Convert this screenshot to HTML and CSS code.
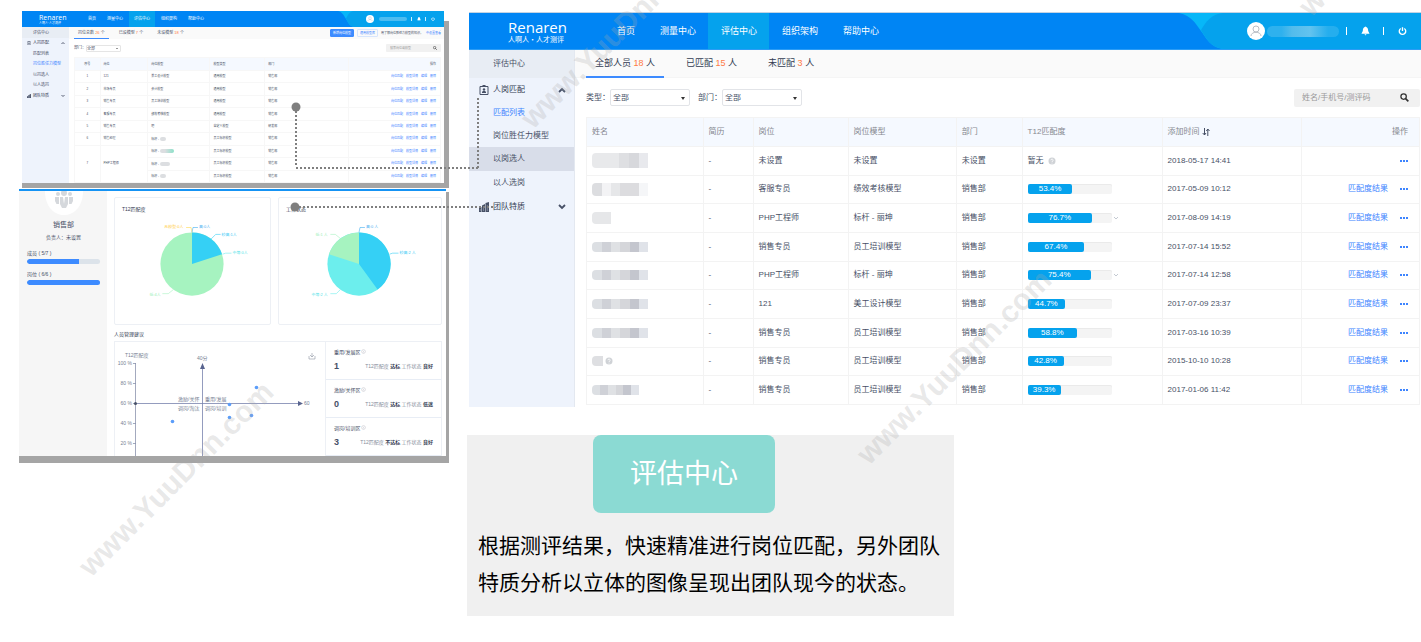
FILE: index.html
```html
<!DOCTYPE html>
<html lang="zh-CN">
<head>
<meta charset="utf-8">
<meta name="viewport" content="width=device-width, initial-scale=1">
<title>评估中心</title>
<link rel="stylesheet" href="styles.css">
</head>
<body>
<svg class="defs" width="0" height="0" aria-hidden="true">
  <symbol id="i-wave" viewBox="0 0 44 36" preserveAspectRatio="none"><path d="M0 0H44V36H0Z" fill="#07b7f8"/><path d="M0 0C13 3 16 10 22 18S31 34 44 36H0Z" fill="#0085f4"/><path d="M44 0C32 1 27 9 22 17C29 29 33 34 44 36Z" fill="#05a2ed"/></symbol>
  <symbol id="i-user" viewBox="0 0 18 18"><circle cx="9" cy="9" r="9" fill="#fff"/><circle cx="9" cy="7" r="3" fill="none" stroke="#b9bec6"/><path d="M4 14C4 9 14 9 14 14" fill="none" stroke="#b9bec6"/></symbol>
  <symbol id="i-bell" viewBox="0 0 10 10"><path d="M5 0C7 1 8 2 8 5L9.500 8H.5L2 5C2 2 3 1 5 0ZM3.800 8.500H6.200L5 10Z" fill="#fff"/></symbol>
  <symbol id="i-power" viewBox="0 0 10 10"><path d="M3 2.200A3.600 3.600 0 1 0 7 2.200M5 .8V5" fill="none" stroke="#fff" stroke-width="1.500"/></symbol>
  <symbol id="i-search" viewBox="0 0 10 10"><circle cx="4" cy="4" r="3" fill="none" stroke="#333" stroke-width="1.400"/><path d="M6.200 6.200L9.300 9.300" stroke="#333" stroke-width="1.800"/></symbol>
  <symbol id="i-badge" viewBox="0 0 10 10"><path d="M1 1.500H9V9.500H1Z" fill="none" stroke="#475066"/><path d="M3.500 0H6.500V2H3.500ZM3 8V7C3 5.500 7 5.500 7 7V8Z" fill="#475066"/><circle cx="5" cy="4.500" r="1.200" fill="#475066"/></symbol>
  <symbol id="i-bars" viewBox="0 0 10 10"><path d="M0 6L2.500 5V10H0ZM3 3.500L6 2V10H3ZM6.500 1L10 0V10H6.500Z" fill="#475066"/><path d="M1.300 7V9M4.500 5V9M8.300 3V9" stroke="#9aa3b5" stroke-width=".6"/></symbol>
  <symbol id="i-up" viewBox="0 0 8 6"><path d="M1 5L4 2L7 5" fill="none" stroke="#475066" stroke-width="1.800"/></symbol>
  <symbol id="i-down" viewBox="0 0 8 6"><path d="M1 1L4 4L7 1" fill="none" stroke="#475066" stroke-width="1.800"/></symbol>
  <symbol id="i-thin" viewBox="0 0 8 6"><path d="M2 2L4 4L6 2" fill="none" stroke="#b5bcc6" stroke-width=".8"/></symbol>
  <symbol id="i-help" viewBox="0 0 8 8"><circle cx="4" cy="4" r="3.500" fill="#cfd2d6"/><path d="M2.800 3.200C2.800 1.800 5.300 1.800 5.200 3.200C5.200 4 4 4 4 5M4 5.700V6.500" fill="none" stroke="#fff" stroke-width=".8"/></symbol>
  <symbol id="i-info" viewBox="0 0 8 8"><circle cx="4" cy="4" r="3" fill="none" stroke="#bcbfc6" stroke-width=".8"/><path d="M4 3V5.500" stroke="#bcbfc6" stroke-width=".8"/></symbol>
  <symbol id="i-sort" viewBox="0 0 8 8"><path d="M2.500 0V7M.7 5L2.500 7L4 5M5.800 8V1M4.300 3L5.800 1L7.500 3" fill="none" stroke="#475066"/></symbol>
</svg>

<main class="page">
  <div class="previews">
    <section class="mini" aria-label="岗位胜任力模型">
      <div class="mini-screen">
        <header class="mini-head">
          <a class="mini-logo" href="#"><b>Renaren</b><span>人啊人·人才测评</span></a>
          <nav class="mini-nav"><a href="#">首页</a><a href="#">测量中心</a><a href="#" class="on">评估中心</a><a href="#">组织架构</a><a href="#">帮助中心</a></nav>
          <svg class="mini-wave"><use href="#i-wave"/></svg>
          <div class="mini-user"><svg class="mini-avatar"><use href="#i-user"/></svg><span class="mini-blur"></span><i></i><svg class="mini-ic"><use href="#i-bell"/></svg><i></i><svg class="mini-ic"><use href="#i-power"/></svg></div>
        </header>
        <div class="mini-body">
          <aside class="mini-side">
            <h3>评估中心</h3>
            <nav>
              <a href="#" class="group"><svg><use href="#i-badge"/></svg>人岗匹配<svg class="chev"><use href="#i-up"/></svg></a>
              <a href="#">匹配列表</a><a href="#" class="on">岗位胜任力模型</a><a href="#">以岗选人</a><a href="#">以人选岗</a>
              <a href="#" class="group"><svg><use href="#i-bars"/></svg>团队特质<svg class="chev"><use href="#i-down"/></svg></a>
            </nav>
          </aside>
          <div class="mini-main">
            <div class="mini-tabs">
              <a href="#" class="on">岗位总数 <em>26</em> 个</a><a href="#">已设模型 <em>7</em> 个</a><a href="#">未设模型 <em>18</em> 个</a>
              <div class="mini-actions"><button class="fill">新增岗位模型</button><button>通用模型库</button><span>用了解岗位胜任力模型的知识，</span><a href="#">中设置查看</a></div>
            </div>
            <div class="mini-filter">
              <label for="m-dept">部门：</label><span class="mini-select"><select id="m-dept"><option>全部</option></select></span>
              <span class="mini-search"><input type="text" aria-label="搜索岗位" placeholder="搜索岗位或模型"><svg><use href="#i-search"/></svg></span>
            </div>
            <table class="mini-table">
              <thead><tr><th>序号</th><th>岗位</th><th>岗位模型</th><th>模型类型</th><th>部门</th><th>操作</th></tr></thead>
              <tbody>
                <tr><td>1</td><td>121</td><td>美工设计模型</td><td>通用模型</td><td>销售部</td><td><a href="#">岗位匹配</a><a href="#">模型详情</a><a href="#">编辑</a><a href="#">删除</a></td></tr>
                <tr><td>2</td><td>市场专员</td><td>会计模型</td><td>通用模型</td><td>销售部</td><td><a href="#">岗位匹配</a><a href="#">模型详情</a><a href="#">编辑</a><a href="#">删除</a></td></tr>
                <tr><td>3</td><td>销售专员</td><td>员工培训模型</td><td>通用模型</td><td>销售部</td><td><a href="#">岗位匹配</a><a href="#">模型详情</a><a href="#">编辑</a><a href="#">删除</a></td></tr>
                <tr><td>4</td><td>客服专员</td><td>绩效考核模型</td><td>通用模型</td><td>销售部</td><td><a href="#">岗位匹配</a><a href="#">模型详情</a><a href="#">编辑</a><a href="#">删除</a></td></tr>
                <tr><td>5</td><td>销售专员</td><td>吧</td><td>自定义模型</td><td>研发部</td><td><a href="#">岗位匹配</a><a href="#">模型详情</a><a href="#">编辑</a><a href="#">删除</a></td></tr>
                <tr><td>6</td><td>销售经理</td><td>标杆 - <span class="chip"></span></td><td>员工标杆模型</td><td>销售部</td><td><a href="#">岗位匹配</a><a href="#">模型详情</a><a href="#">编辑</a><a href="#">删除</a></td></tr>
                <tr><td rowspan="3">7</td><td rowspan="3">PHP工程师</td><td>标杆 - <span class="chip mint"></span></td><td>员工标杆模型</td><td>销售部</td><td><a href="#">岗位匹配</a><a href="#">模型详情</a><a href="#">编辑</a><a href="#">删除</a></td></tr>
                <tr class="sub"><td>标杆 - <span class="chip mid"></span></td><td>员工标杆模型</td><td>销售部</td><td><a href="#">岗位匹配</a><a href="#">模型详情</a><a href="#">编辑</a><a href="#">删除</a></td></tr>
                <tr class="sub"><td>标杆 - <span class="chip"></span></td><td>员工标杆模型</td><td>销售部</td><td><a href="#">岗位匹配</a><a href="#">模型详情</a><a href="#">编辑</a><a href="#">删除</a></td></tr>
              </tbody>
            </table>
          </div>
        </div>
      </div>
    </section>

    <section class="team" aria-label="团队特质">
      <div class="team-screen">
        <aside class="team-side">
          <svg class="team-avatar" viewBox="0 0 38 25"><path d="M0 0H38C38 32 0 32 0 0Z" fill="#fff"/><g fill="#d5d8dc"><circle cx="19" cy="2" r="3"/><circle cx="13" cy="3" r="2"/><circle cx="25" cy="3" r="2"/><path d="M15 6H23V13L21 17H17L15 13ZM10 6H14V13H11.500L10 10ZM24 6H28V10L26.500 13H24Z"/></g><path d="M18 6H20L19 13Z" fill="#fff"/></svg>
          <h3>销售部</h3>
          <p>负责人：未设置</p>
          <div class="meter"><span>成员 ( 5/7 )</span><div class="track"><div style="width:71%"></div></div></div>
          <div class="meter"><span>岗位 ( 6/6 )</span><div class="track"><div style="width:100%"></div></div></div>
        </aside>
        <div class="team-main">
          <div class="cards">
            <article class="card"><h4>T12匹配度</h4>
              <svg viewBox="0 0 157 110">
                <circle cx="78" cy="52" r="32" fill="#a6f3c0"/><path d="M78 52V20A32 32 0 0 1 108.400 42Z" fill="#35d0f5"/>
                <g fill="none" stroke-width=".6"><path d="M78 20L77 15H72" stroke="#ffd84d"/><path d="M78 20L79 15H84" stroke="#3faef0"/><path d="M97 27L102 22H107" stroke="#35d0f5"/><path d="M109 42L112 41H118" stroke="#6ceeed"/><path d="M59 78L54 82H48" stroke="#a6f3c0"/></g>
                <g class="t4"><text x="50" y="16" fill="#ffca3a">无模型:0人</text><text x="85" y="16" fill="#3faef0">高:0人</text><text x="108" y="24" fill="#35c8f5">较高:1人</text><text x="119" y="42" fill="#51dfe8">中等:0人</text><text x="35" y="84" fill="#98eeb5">低:4人</text></g>
              </svg></article>
            <article class="card wide"><h4>工作状态</h4>
              <svg viewBox="0 0 164 110">
                <circle cx="81" cy="52" r="32" fill="#6ceeed"/><path d="M81 52V20A32 32 0 0 1 99.800 77.900Z" fill="#35d0f5"/><path d="M81 52L50.600 42.100A32 32 0 0 1 81 20Z" fill="#a6f3c0"/>
                <g fill="none" stroke-width=".6"><path d="M81 20L82 15H87" stroke="#3faef0"/><path d="M112 42L115 41H121" stroke="#35d0f5"/><path d="M62 26L57 22H52" stroke="#a6f3c0"/><path d="M62 78L58 82H52" stroke="#6ceeed"/></g>
                <g class="t4"><text x="88" y="16" fill="#3faef0">高:0 人</text><text x="122" y="42" fill="#35c8f5">较高:2 人</text><text x="37" y="24" fill="#98eeb5">低:1 人</text><text x="33" y="84" fill="#51dfe8">中等:2 人</text></g>
              </svg></article>
          </div>
          <h4 class="advice">人员管理建议</h4>
          <div class="advice-box">
            <svg class="quad" viewBox="1 1 210 115">
              <g fill="none" stroke="#8c93ad" stroke-width=".8"><path d="M21.500 22V115M19 22.500H22M19 42.500H22M19 62.500H22M19 82.500H22M19 102.500H22"/><path d="M88.500 24V115M22 62.500H188" stroke="#7883ad"/></g>
              <path d="M88.500 22L91 28H86ZM189 62.500L184 60V65Z" fill="#58648f"/><circle cx="21.500" cy="62.500" r="1.500" fill="#475066"/>
              <g fill="#5b9dfa"><circle cx="58.500" cy="80.500" r="1.800"/><circle cx="142.500" cy="46.500" r="1.800"/><circle cx="115.500" cy="63.500" r="1.800"/><circle cx="115.500" cy="76.500" r="1.800"/><circle cx="137.500" cy="74.500" r="1.800"/></g>
              <g class="t4"><text x="11" y="16" class="t5">T12匹配度</text><text x="83" y="19" class="t5">40分</text><text x="190" y="64" class="t5">60</text></g>
              <g class="t5" text-anchor="end"><text x="18" y="24">100 %</text><text x="18" y="44">80 %</text><text x="18" y="64">60 %</text><text x="18" y="84">40 %</text><text x="18" y="104">20 %</text></g>
              <g class="t5"><text x="64" y="60">激励/关怀</text><text x="91" y="60">重用/发展</text><text x="64" y="69">调岗/淘汰</text><text x="91" y="69">调岗/培训</text></g>
              <path d="M198 12V16M196 14L198 16L200 14M195 15V18H201V15" fill="none" stroke="#8f96a3" stroke-width=".6"/>
            </svg>
            <div class="stats">
              <div class="stat"><h5>重用/发展区 <svg><use href="#i-info"/></svg></h5><p><strong>1</strong><span>T12匹配度 <b>达标</b> 工作状态 <b>良好</b></span></p></div>
              <div class="stat"><h5>激励/关怀区 <svg><use href="#i-info"/></svg></h5><p><strong>0</strong><span>T12匹配度 <b>达标</b> 工作状态 <b>低迷</b></span></p></div>
              <div class="stat"><h5>调岗/培训区 <svg><use href="#i-info"/></svg></h5><p><strong>3</strong><span>T12匹配度 <b>不达标</b> 工作状态 <b>良好</b></span></p></div>
            </div>
          </div>
        </div>
      </div>
    </section>
  </div>

  <div class="detail">
    <section class="app" aria-label="匹配列表">
      <header class="head">
        <a class="logo" href="#"><b>Renaren</b><span>人啊人·人才测评</span></a>
        <nav class="nav"><a href="#">首页</a><a href="#">测量中心</a><a href="#" class="on">评估中心</a><a href="#">组织架构</a><a href="#">帮助中心</a></nav>
        <svg class="wave"><use href="#i-wave"/></svg>
        <div class="user"><svg class="avatar"><use href="#i-user"/></svg><span class="blur"></span><div class="tools"><i></i><svg><use href="#i-bell"/></svg><i></i><svg><use href="#i-power"/></svg></div></div>
      </header>
      <div class="body">
        <aside class="side">
          <h2>评估中心</h2>
          <nav>
            <a href="#" class="group"><svg><use href="#i-badge"/></svg>人岗匹配<svg class="chev"><use href="#i-up"/></svg></a>
            <a href="#" class="on">匹配列表</a><a href="#">岗位胜任力模型</a><a href="#" class="hover">以岗选人</a><a href="#">以人选岗</a>
            <a href="#" class="group"><svg><use href="#i-bars"/></svg>团队特质<svg class="chev"><use href="#i-down"/></svg></a>
          </nav>
        </aside>
        <div class="content">
          <div class="tabs"><a href="#" class="on">全部人员 <em>18</em> 人</a><a href="#">已匹配 <em>15</em> 人</a><a href="#">未匹配 <em>3</em> 人</a></div>
          <div class="filter">
            <label for="type">类型：</label><span class="select"><select id="type"><option>全部</option></select></span>
            <label for="dept">部门：</label><span class="select"><select id="dept"><option>全部</option></select></span>
            <span class="search"><input type="text" aria-label="搜索人员" placeholder="姓名/手机号/测评码"><button aria-label="搜索"><svg><use href="#i-search"/></svg></button></span>
          </div>
          <table class="table">
            <thead><tr><th>姓名</th><th>简历</th><th>岗位</th><th>岗位模型</th><th>部门</th><th>T12匹配度</th><th>添加时间 <svg class="sort"><use href="#i-sort"/></svg></th><th>操作</th></tr></thead>
            <tbody>
              <tr><td><span class="name tall"></span></td><td>-</td><td>未设置</td><td>未设置</td><td>未设置</td><td>暂无 <svg class="help"><use href="#i-help"/></svg></td><td>2018-05-17 14:41</td><td><a href="#" class="more" aria-label="更多"></a></td></tr>
              <tr><td><span class="name tall light"></span></td><td>-</td><td>客服专员</td><td>绩效考核模型</td><td>销售部</td><td><div class="rate"><div class="bar"><div style="width:53.4%">53.4%</div></div></div></td><td>2017-05-09 10:12</td><td><a href="#">匹配度结果</a><a href="#" class="more" aria-label="更多"></a></td></tr>
              <tr><td><span class="name tall short"></span></td><td>-</td><td>PHP工程师</td><td>标杆 - 丽坤</td><td>销售部</td><td><div class="rate"><div class="bar"><div style="width:76.7%">76.7%</div></div><svg><use href="#i-thin"/></svg></div></td><td>2017-08-09 14:19</td><td><a href="#">匹配度结果</a><a href="#" class="more" aria-label="更多"></a></td></tr>
              <tr><td><span class="name"></span></td><td>-</td><td>销售专员</td><td>员工培训模型</td><td>销售部</td><td><div class="rate"><div class="bar"><div style="width:67.4%">67.4%</div></div></div></td><td>2017-07-14 15:52</td><td><a href="#">匹配度结果</a><a href="#" class="more" aria-label="更多"></a></td></tr>
              <tr><td><span class="name"></span></td><td>-</td><td>PHP工程师</td><td>标杆 - 丽坤</td><td>销售部</td><td><div class="rate"><div class="bar"><div style="width:75.4%">75.4%</div></div><svg><use href="#i-thin"/></svg></div></td><td>2017-07-14 12:58</td><td><a href="#">匹配度结果</a><a href="#" class="more" aria-label="更多"></a></td></tr>
              <tr><td><span class="name"></span></td><td>-</td><td>121</td><td>美工设计模型</td><td>销售部</td><td><div class="rate"><div class="bar"><div style="width:44.7%">44.7%</div></div></div></td><td>2017-07-09 23:37</td><td><a href="#">匹配度结果</a><a href="#" class="more" aria-label="更多"></a></td></tr>
              <tr><td><span class="name"></span></td><td>-</td><td>销售专员</td><td>员工培训模型</td><td>销售部</td><td><div class="rate"><div class="bar"><div style="width:58.8%">58.8%</div></div></div></td><td>2017-03-16 10:39</td><td><a href="#">匹配度结果</a><a href="#" class="more" aria-label="更多"></a></td></tr>
              <tr><td><span class="name tiny"></span><svg class="help"><use href="#i-help"/></svg></td><td>-</td><td>销售专员</td><td>员工培训模型</td><td>销售部</td><td><div class="rate"><div class="bar"><div style="width:42.8%">42.8%</div></div></div></td><td>2015-10-10 10:28</td><td><a href="#">匹配度结果</a><a href="#" class="more" aria-label="更多"></a></td></tr>
              <tr><td><span class="name mid"></span></td><td>-</td><td>销售专员</td><td>员工培训模型</td><td>销售部</td><td><div class="rate"><div class="bar"><div style="width:39.3%">39.3%</div></div></div></td><td>2017-01-06 11:42</td><td><a href="#">匹配度结果</a><a href="#" class="more" aria-label="更多"></a></td></tr>
            </tbody>
          </table>
        </div>
      </div>
    </section>

    <section class="callout">
      <h1>评估中心</h1>
      <p>根据测评结果，快速精准进行岗位匹配，另外团队特质分析以立体的图像呈现出团队现今的状态。</p>
    </section>
  </div>

  <svg class="links" width="500" height="230" aria-hidden="true"><g fill="none" stroke="#7f7f7f" stroke-width="2" stroke-dasharray="2 2"><path d="M296 107V167M296 168H478M478 98V168M295 207H494"/></g><g fill="#7f7f7f"><circle cx="296" cy="107" r="4.500"/><circle cx="295" cy="207" r="4.500"/></g></svg>
  <span class="mark m1">www.YuuDnn.com</span>
  <span class="mark m2">www.YuuDnn.com</span>
  <span class="mark m3">www.YuuDnn.com</span>
  <span class="mark m4">www.YuuDnn.com</span>
</main>
</body>
</html>
```

FILE: styles.css
```css
*{box-sizing:border-box}
body{margin:0;background:#fff;color:#475066;font-family:"Liberation Sans","Noto Sans CJK SC",sans-serif;line-height:1}
h1,h2,h3,h4,h5,p{margin:0;font-weight:400}
a{color:inherit;text-decoration:none}
em,i{font-style:normal}
button,input,select{font:inherit;color:inherit;margin:0;padding:0;border:0;background:none;min-width:0}
svg{display:block;flex:none}
table{border-collapse:collapse;table-layout:fixed;width:100%}
th,td{padding:0;font-weight:400;text-align:left}
.defs{position:absolute}

.page{position:relative;display:grid;grid-template-columns:430px minmax(0,1fr);gap:20px;align-items:start;min-height:100vh;padding:11px 0 26px 19px;overflow:hidden}
.previews{display:grid;gap:1px}
.detail{padding-top:1px}

/* model list preview */
.mini{margin-left:3px;padding:0 5px 5px 0;background:linear-gradient(#a5a5a5,#a5a5a5) right bottom/5px calc(100% - 10px) no-repeat,linear-gradient(#a5a5a5,#a5a5a5) left bottom/100% 5px no-repeat;font-size:4px}
.mini-screen{background:#fff}
.mini-head{display:flex;height:16px;background:#0085f4;color:#fff}
.mini-logo{width:56px;padding:3px 0 0 17px;white-space:nowrap}
.mini-logo b{display:block;font:400 7px/7px "Open Sans",sans-serif}
.mini-logo span{display:block;font-size:3px;line-height:4px}
.mini-nav{display:flex;flex:1;padding-left:5px;line-height:16px}
.mini-nav a{padding:0 5px;margin-right:1px}
.mini-nav .on{background:#05a2ed}
.mini-wave{width:16px;height:16px}
.mini-user{display:flex;align-items:center;justify-content:space-between;width:90px;padding:0 9px 0 12px;background:#05a2ed}
.mini-avatar{width:8px;height:8px}
.mini-blur{width:28px;height:4px;background:#4dbcf0;border-radius:2px}
.mini-user i{width:1px;height:4px;background:#cdeefd}
.mini-ic{width:4px;height:4px}
.mini-body{display:flex}
.mini-side{flex:none;width:47px;background:#eef3fc}
.mini-side h3{height:11px;padding-left:11px;background:#e8edf4;font-size:4px;line-height:12px}
.mini-side nav{display:flex;flex-direction:column;height:63px}
.mini-side a{display:flex;flex:1;align-items:center;padding-left:11px;white-space:nowrap}
.mini-side .group{gap:2px;padding:0 4px 0 5px;color:#333c52}
.mini-side svg{width:4px;height:4px}
.mini-side .chev{margin-left:auto}
.mini-side .on{color:#3d84ff}
.mini-main{flex:1;min-width:0;padding:0 3px 0 5px}
.mini-tabs{display:flex;gap:6px;height:12px;line-height:11px;margin:0 -3px 0 -5px;padding:0 3px 0 5px;background:#fafafa;white-space:nowrap}
.mini-tabs>a{padding:0 4px}
.mini-tabs>.on{border-bottom:1px solid #3d8bff}
.mini-tabs em{color:#ff7a45}
.mini-actions{display:flex;align-items:center;gap:3px;margin-left:auto;font-size:3px}
.mini-actions button{height:8px;padding:0 2px;border:1px solid #d7e5fd;border-radius:1px;color:#3d84ff;line-height:6px}
.mini-actions .fill{background:#3d8bff;border-color:#3d8bff;color:#fff}
.mini-actions a{color:#3d84ff}
.mini-filter{display:flex;align-items:center;height:18px}
.mini-select{position:relative;width:35px;height:7px;border:1px solid #e5e5e5;border-radius:1px}
.mini-select select{display:block;width:100%;height:5px;appearance:none;font-size:4px;line-height:5px}
.mini-select::after{content:"";position:absolute;right:2px;top:2px;border:1px solid transparent;border-top-color:#333}
.mini-search{display:flex;align-items:center;width:55px;height:8px;margin-left:auto;padding:0 4px;background:#f1f1f1;border-radius:1px}
.mini-search input{flex:1;font-size:3px;height:8px}
.mini-search svg{width:4px;height:4px}
.mini-table{height:126px;font-size:3px}
.mini-table th{height:13px;background:#f5f9ff}
.mini-table tbody tr{height:12px}
.mini-table th,.mini-table td{padding:0 3px;border:1px solid #f7f7f7;white-space:nowrap}
.mini-table th:nth-child(1){width:7%}
.mini-table th:nth-child(2){width:13%}
.mini-table th:nth-child(3){width:17%}
.mini-table th:nth-child(4){width:15%}
.mini-table th:nth-child(5){width:23%}
.mini-table tr:not(.sub)>:first-child{text-align:center}
.mini-table tr>:last-child{text-align:right;padding-right:4px}
.mini-table td a{margin-left:3px;color:#3d84ff}
.mini-table td{line-height:3px}
.chip{display:inline-block;width:6px;height:4px;border-radius:2px;background:#dcdee1;vertical-align:middle}
.chip.mid{width:10px}
.chip.mint{width:14px;background:linear-gradient(90deg,#dcdee1 35%,#8be0c8)}

/* team preview */
.team{padding:0 3px 7px 0;background:linear-gradient(#a5a5a5,#a5a5a5) right bottom/3px calc(100% - 3px) no-repeat,linear-gradient(#a5a5a5,#a5a5a5) left bottom/100% 7px no-repeat;font-size:5px}
.team-screen{display:flex;border-top:2px solid #1593f4;background:#fff}
.team-side{width:88px;padding:0 7px 0 8px;background:#f6f6f6;text-align:center}
.team-avatar{width:38px;height:25px;margin:0 auto}
.team-side h3{font-size:7px;line-height:18px}
.team-side p{line-height:6px}
.meter{margin-top:10px;text-align:left}
.meter span{display:block;line-height:6px;margin-bottom:3px}
.meter+.meter{margin-top:7px}
.track{height:5px;border-radius:3px;background:#dce3ea;overflow:hidden}
.track div{height:5px;border-radius:3px 0 0 3px;background:#3d8bff}
.team-main{flex:1;min-width:0;padding:6px 4px 0 7px}
.cards{display:grid;grid-template-columns:157fr 164fr;gap:7px}
.card{height:128px;padding-top:8px;border:1px solid #edf0f5;border-radius:2px}
.card h4{padding-left:7px;font-size:5px;line-height:6px;color:#333c52}
.card svg{width:100%;height:110px}
.t4{font-size:4px;fill:#777f94}
.t5{font-size:5px;fill:#777f94}
.advice{padding-top:3px;font-size:5px;line-height:13px;color:#333c52}
.advice-box{display:flex;height:115px;border:1px solid #edf0f5;border-bottom:0;overflow:hidden}
.quad{width:210px;height:115px}
.stats{flex:1;border-left:1px solid #edf0f5}
.stat{height:38px;padding:7px 8px 0;border-bottom:1px solid #e8edf5}
.stat h5{display:flex;gap:1px;font-size:5px;line-height:6px}
.stat svg{width:5px;height:5px}
.stat p{display:flex;align-items:center;justify-content:space-between;margin-top:7px;white-space:nowrap}
.stat strong{font-size:9px;line-height:9px}
.stat span{color:#868d9b}
.stat b{color:#333c52}

/* matching list */
.app{border-top:1px solid #c2d3e4;font-size:8px}
.head{display:flex;height:37px;background:#0085f4;border-bottom:1px solid #2c9cf5;color:#fff}
.logo{width:135px;padding:7px 0 0 39px;white-space:nowrap}
.logo b{display:block;font:400 15px/15px "Open Sans",sans-serif}
.logo span{display:block;font-family:"Noto Sans CJK SC",sans-serif;font-size:7px;line-height:8px}
.nav{display:flex;flex:1;font-size:9px;line-height:36px;white-space:nowrap}
.nav a{padding:0 12px 0 13px}
.nav .on{background:#05a2ed}
.wave{width:44px;height:36px}
.user{display:flex;align-items:center;width:198px;padding:0 14px 0 24px;background:#05a2ed}
.avatar{width:18px;height:18px}
.blur{width:72px;height:11px;margin:0 7px 0 2px;border-radius:6px;background:linear-gradient(90deg,#2eb1ee 20%,#53bcec 35%,#62c3ef 60%,#25aeee 85%)}
.tools{display:flex;flex:1;align-items:center;justify-content:space-between}
.tools i{width:1px;height:8px;background:#fff}
.tools svg{width:9px;height:10px}
.body{display:flex}
.side{flex:none;width:106px;background:#eef3fc;border-right:1px solid #e3e8f0}
.side h2{height:28px;padding-left:24px;background:#e8edf4;font-size:8px;line-height:28px}
.side a{display:flex;align-items:center;height:24px;padding-left:24px}
.side a:nth-child(-n+3){height:23px}
.side .group{gap:4px;padding:0 8px 0 10px;color:#333c52}
.side svg{width:10px;height:10px}
.side .chev{width:8px;height:6px;margin-left:auto}
.side .on{color:#3d84ff}
.side .hover{background:#d8dde9}
.content{flex:1;min-width:0;padding:0 1px 2px 11px}
.tabs{display:flex;gap:13px;height:28px;margin:0 -1px 0 -11px;padding-left:11px;background:#fafafa;border-bottom:1px solid #f5f5f5;font-size:9px;line-height:27px;white-space:nowrap}
.tabs a{height:28px;padding:0 9px;color:#333c52}
.tabs .on{border-bottom:2px solid #3d8bff}
.tabs em{color:#ff7a45}
.filter{display:flex;align-items:center;height:39px}
.filter label{width:24px}
.select{position:relative;width:80px;height:17px;margin-right:8px;border:1px solid #e2e4e8;border-radius:2px}
.select select{display:block;width:100%;height:15px;padding-left:2px;appearance:none}
.select::after{content:"";position:absolute;right:4px;top:7px;border:2px solid transparent;border-top:3px solid #333;border-bottom:0}
.search{display:flex;align-items:center;width:126px;height:18px;margin-left:auto;padding:0 11px 0 8px;background:#f1f1f1;border-radius:2px}
.search input{flex:1;height:18px}
.search svg{width:9px;height:9px}
input::placeholder{color:#9a9a9a;opacity:1}
.table{height:288px}
.table th{height:29px;background:#f5f9ff;color:#85888f}
.table tbody tr{height:28px}
.table th,.table td{padding:0 6px 0 5px;border:1px solid #f3f3f3;white-space:nowrap}
.table td{line-height:8px}
.table th:nth-child(1){width:14%}
.table th:nth-child(2){width:6%}
.table th:nth-child(3){width:11.4%}
.table th:nth-child(4){width:13%}
.table th:nth-child(5){width:7.9%}
.table th:nth-child(6){width:16.8%}
.table th:nth-child(7){width:16.8%}
.table tr>:last-child{text-align:right;padding-right:11px}
.table td a{color:#3d84ff}
.table .more{display:inline-block;width:8px;height:2px;margin-left:12px;vertical-align:middle;background:repeating-linear-gradient(90deg,#3d84ff 0 2px,transparent 2px 3px)}
.sort,.help{display:inline-block;width:8px;height:8px;vertical-align:middle}
.help{margin-left:2px}
.name{display:block;width:56px;height:10px;border-radius:4px 0 0 4px;background:linear-gradient(90deg,#dcdfe3 0 17%,#cfd1d7 17% 34%,#dfe1e4 34% 50%,#d5d6da 50% 67%,#c4c6ce 67% 84%,#e0e3e9 84%)}
.name.tall{height:15px;background:linear-gradient(90deg,#e8e9eb 0 48%,#dedfe2 48% 66%,#d7d8dc 66% 84%,#e8e9ed 84%)}
.name.tall.light{height:13px;background:linear-gradient(90deg,#dcdde0 0 17%,#f3f3f5 17% 34%,#e6e7e9 34% 50%,#dcdcdf 50% 84%,#f5f6f8 84%)}
.name.tall.short{width:19px;height:12px;background:#e6e7e9}
.name.tiny{display:inline-block;width:11px;background:#dedfe2;vertical-align:middle}
.name.mid{width:47px}
.rate{display:flex;align-items:center}
.bar{flex:none;width:84px;height:10px;border-radius:2px;background:#f4f4f4;box-shadow:inset 0 1px 0 #eaeaea}
.bar div{height:10px;border-radius:2px;background:#05a2ed;color:#fff;line-height:10px;text-align:center}
.rate svg{width:8px;height:6px}

.callout{max-width:487px;margin:28px 0 0 -2px;padding:0 11px 15px;background:#f0f0f0}
.callout h1{width:182px;margin:0 0 0 115px;border-radius:8px;background:#8bdad3;color:#fff;font-size:27px;line-height:78px;text-align:center}
.callout p{margin:14px -4px 0 0;color:#000;font-size:21px;line-height:37px}

/* overlays */
.links{position:absolute;left:0;top:0}
.mark{position:absolute;color:rgba(170,170,170,.27);font-size:30px;font-weight:700;line-height:30px;transform:rotate(-45deg);transform-origin:0 50%;white-space:nowrap;pointer-events:none}
.m1{left:84px;top:556px}
.m2{left:862px;top:444px}
.m3{left:526px;top:108px}
.m4{left:1304px;top:-4px}
```
